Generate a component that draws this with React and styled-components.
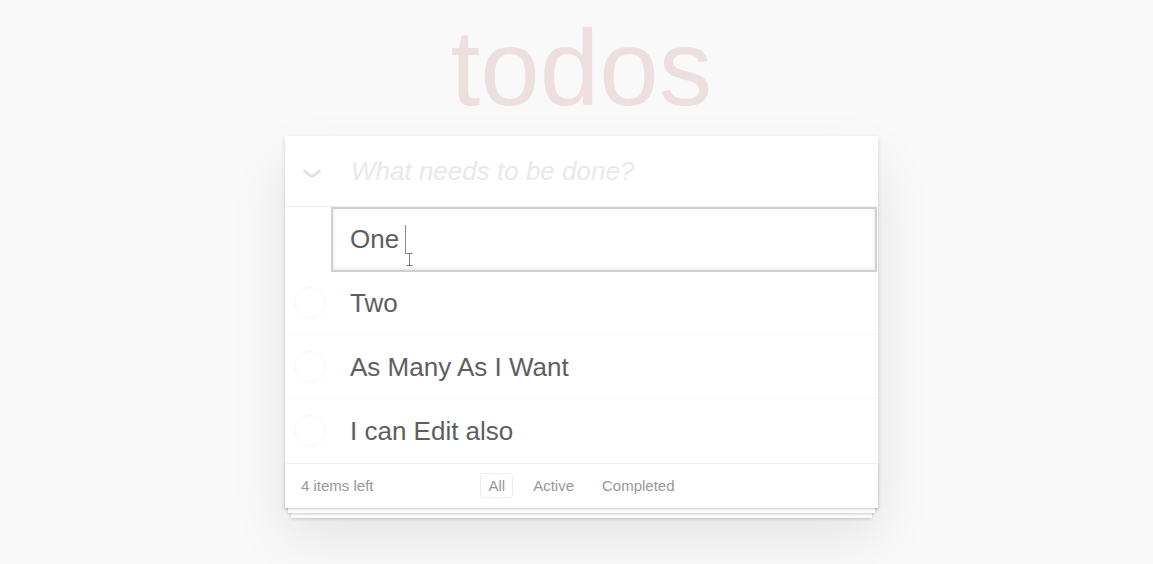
import React, { useState } from "react";
import styled, { createGlobalStyle } from "styled-components";

const GlobalStyle = createGlobalStyle`
  *, *::before, *::after { box-sizing: border-box; }
  body {
    margin: 0;
    background: #f9f9f9;
    color: #5e5e60;
    font-family: "Liberation Sans", Arial, sans-serif;
    font-size: 15px;
  }
`;

const Page = styled.div`
  min-height: 100vh;
  overflow: hidden;
  padding: 0 0 56px 10px;
`;

const Main = styled.main`
  width: 100%;
  max-width: 593px;
  margin: 0 auto;
`;

const Title = styled.h1`
  margin: 0;
  font-size: 107px;
  font-weight: 400;
  line-height: 136px;
  text-align: center;
  color: #eddfdf;
`;

const Card = styled.section`
  background: #fff;
  box-shadow: 0 2px 4px rgba(0, 0, 0, 0.14), 0 27px 54px rgba(0, 0, 0, 0.09);
`;

const Header = styled.header`
  display: flex;
  align-items: center;
  height: 70px;
`;

const ToggleAll = styled.button`
  display: flex;
  flex: none;
  align-items: center;
  justify-content: center;
  width: 54px;
  height: 70px;
  padding: 6px 0 0;
  border: 0;
  background: none;
`;

const NewTodo = styled.input`
  flex: 1;
  min-width: 0;
  height: 70px;
  padding: 0 12px;
  border: 0;
  outline: 0;
  background: transparent;
  color: inherit;
  font: 26px "Liberation Sans", Arial, sans-serif;
  &::placeholder {
    color: #e9e8ea;
    font-style: italic;
    opacity: 1;
  }
`;

const List = styled.ul`
  margin: 0;
  padding: 0;
  border-top: 1px solid #efefef;
  list-style: none;
`;

const Row = styled.li`
  display: flex;
  align-items: center;
  height: 64px;
  padding-left: 9px;
  border-bottom: 1px solid #f7f7f7;
  &:last-child { border-bottom: 0; }
`;

const EditRow = styled.li`
  position: relative;
  height: 64px;
  padding: 0 1px 0 46px;
`;

const EditField = styled.input`
  display: block;
  width: 100%;
  height: 65px;
  padding: 0 17px;
  border: 2px solid #d0d0d0;
  outline: 0;
  background: #fff;
  box-shadow: inset 0 -1px 4px rgba(0, 0, 0, 0.1);
  color: inherit;
  caret-color: transparent;
  font: 26px "Liberation Sans", Arial, sans-serif;
`;

const Caret = styled.span`
  position: absolute;
  top: 18px;
  left: 120px;
  width: 1px;
  height: 29px;
  background: #8a8a8d;
`;

const Pointer = styled.svg`
  position: absolute;
  top: 46px;
  left: 121px;
  width: 7px;
  height: 13px;
`;

const Check = styled.input`
  flex: none;
  width: 32px;
  height: 32px;
  margin: 0;
  border: 1px solid #f7f7f7;
  border-radius: 50%;
  appearance: none;
  background: #fff;
  &:checked { background: #e4f4ef; }
`;

const Label = styled.label`
  padding: 0 24px;
  font-size: 26px;
  line-height: 32px;
`;

const Footer = styled.footer`
  position: relative;
  display: grid;
  grid-template-columns: 1fr auto 1fr;
  align-items: center;
  height: 45px;
  padding: 0 16px 1px;
  border-top: 1px solid #f3f3f3;
  color: #979797;
  line-height: 19px;
  &::before {
    content: "";
    position: absolute;
    right: 0;
    bottom: 0;
    left: 0;
    height: 44px;
    box-shadow: 0 1px 2px rgba(0, 0, 0, 0.18), 0 8px 0 -3px #fafafa,
      0 9px 2px -3px rgba(0, 0, 0, 0.18), 0 16px 0 -6px #fafafa,
      0 17px 3px -6px rgba(0, 0, 0, 0.18);
    pointer-events: none;
  }
`;

const Filters = styled.nav`
  display: flex;
  gap: 12px;
`;

const FilterLink = styled.a`
  padding: 2px 7px;
  border: 1px solid ${(p) => (p.$active ? "#f3ebeb" : "transparent")};
  border-radius: 3px;
  color: inherit;
  text-decoration: none;
`;

const todos = ["Two", "As Many As I Want", "I can Edit also"];
const filters = ["All", "Active", "Completed"];

export default function App() {
  const [draft, setDraft] = useState("");
  const [editing, setEditing] = useState("One ");
  const [filter, setFilter] = useState("All");

  return (
    <Page>
      <GlobalStyle />
      <Main>
        <Title>todos</Title>
        <Card>
          <Header>
            <ToggleAll type="button" aria-label="Mark all as complete">
              <svg width="20" height="12" viewBox="0 0 20 12" fill="none">
                <path d="M1.500 2.500 L9 8 Q10 8.600 11 8 L18.500 2.500" stroke="#e2e2e4" strokeWidth="2.800" />
              </svg>
            </ToggleAll>
            <NewTodo
              aria-label="New todo"
              placeholder="What needs to be done?"
              value={draft}
              onChange={(e) => setDraft(e.target.value)}
            />
          </Header>
          <List>
            <EditRow>
              <EditField
                aria-label="Edit todo"
                value={editing}
                onChange={(e) => setEditing(e.target.value)}
              />
              <Caret />
              <Pointer viewBox="0 0 7 13" fill="none" stroke="#77777a" aria-hidden="true">
                <path d="M0.500 0.500H6.500M3.500 0.500V12.500M0.500 12.500H6.500" />
              </Pointer>
            </EditRow>
            {todos.map((text, i) => (
              <Row key={text}>
                <Check type="checkbox" id={`todo-${i}`} />
                <Label htmlFor={`todo-${i}`}>{text}</Label>
              </Row>
            ))}
          </List>
          <Footer>
            <span>4 items left</span>
            <Filters aria-label="Filter">
              {filters.map((name) => (
                <FilterLink
                  key={name}
                  href={`#/${name.toLowerCase()}`}
                  $active={filter === name}
                  onClick={() => setFilter(name)}
                >
                  {name}
                </FilterLink>
              ))}
            </Filters>
          </Footer>
        </Card>
      </Main>
    </Page>
  );
}
